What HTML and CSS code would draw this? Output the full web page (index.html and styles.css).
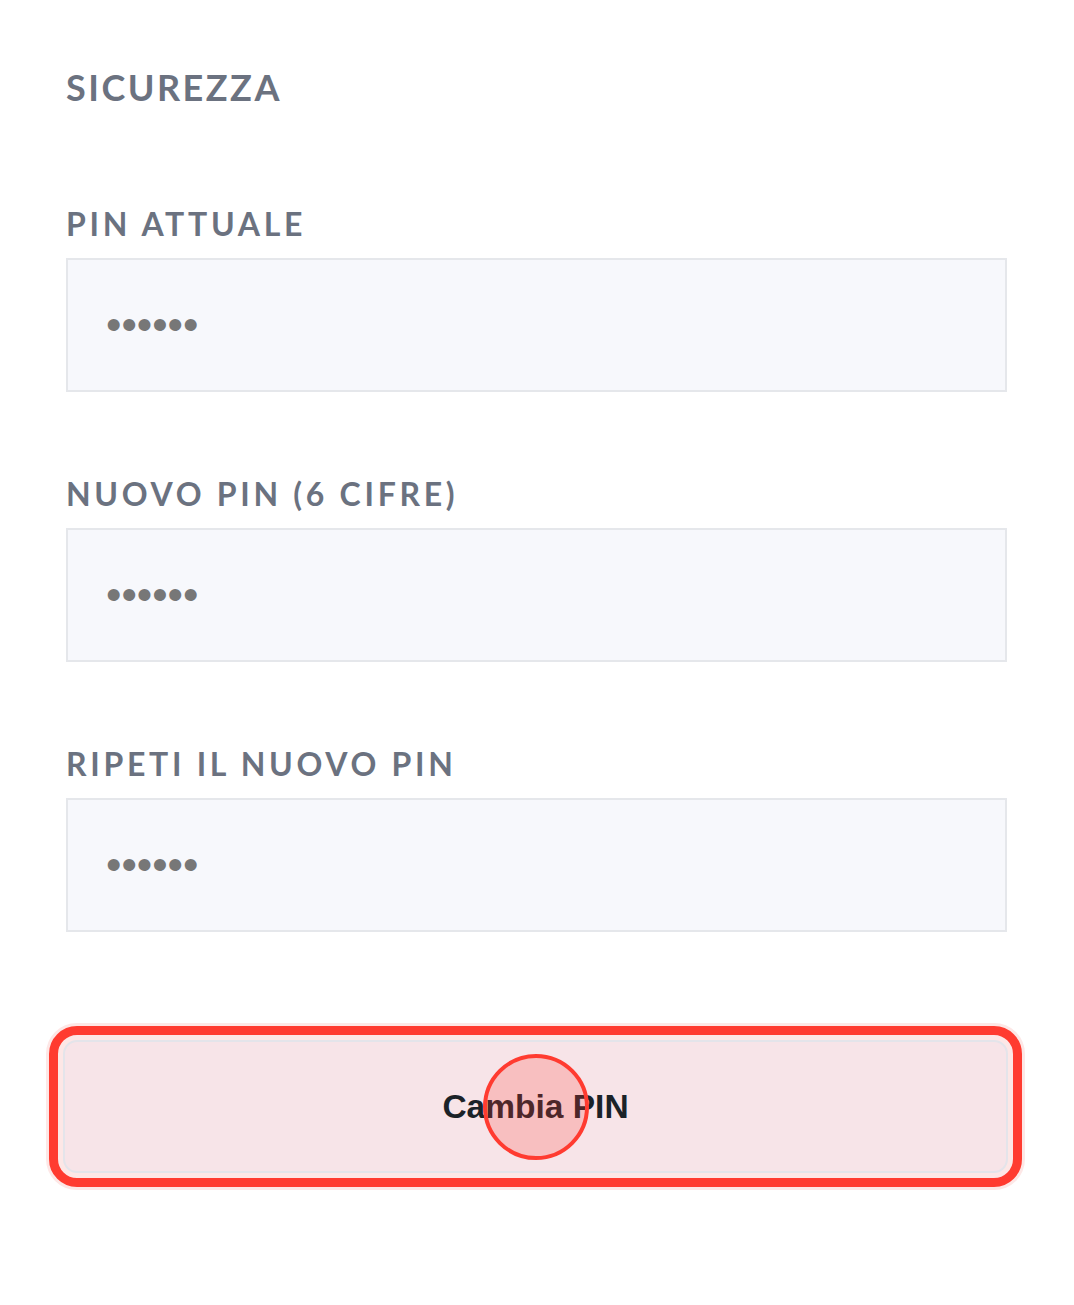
FILE: index.html
```html
<!DOCTYPE html>
<html lang="it">
<head>
<meta charset="utf-8">
<title>Sicurezza</title>
<link rel="stylesheet" href="styles.css">
</head>
<body>
<main class="page">
  <h2 class="section-title">SICUREZZA</h2>
  <form class="pin-form">
    <div class="field">
      <label class="field-label">PIN ATTUALE</label>
      <div class="field-input"><span class="mask">••••••</span></div>
    </div>
    <div class="field">
      <label class="field-label">NUOVO PIN (6 CIFRE)</label>
      <div class="field-input"><span class="mask">••••••</span></div>
    </div>
    <div class="field">
      <label class="field-label">RIPETI IL NUOVO PIN</label>
      <div class="field-input"><span class="mask">••••••</span></div>
    </div>
    <div class="actions">
      <button type="button" class="btn-change">Cambia PIN<span class="tap-marker"></span></button>
    </div>
  </form>
</main>
</body>
</html>
```

FILE: styles.css
```css
* { box-sizing: border-box; }
html, body { margin: 0; padding: 0; background: #ffffff; }
body { font-family: "Lato", "Noto Sans", sans-serif; }

.page {
  padding: 65px 67px 130px 66px;
  width: 1074px;
}

.section-title {
  margin: 0;
  font-size: 36px;
  line-height: 44px;
  font-weight: 700;
  letter-spacing: 2.5px;
  color: #6b7280;
}

.pin-form {
  margin-top: 95px;
  display: flex;
  flex-direction: column;
  gap: 82px;
}

.field {
  display: flex;
  flex-direction: column;
  gap: 14px;
}

.field-label {
  font-size: 32px;
  line-height: 40px;
  font-weight: 700;
  letter-spacing: 3.7px;
  color: #6b7280;
}

.field-input {
  height: 134px;
  width: 941px;
  border: 2px solid #e5e7eb;
  background: #f7f8fc;
  display: flex;
  align-items: center;
  padding-left: 38px;
}

.mask {
  font-family: "Liberation Sans", Arial, sans-serif;
  font-size: 44px;
  line-height: 1;
  color: #777777;
}

.actions {
  margin-top: 26px;
  margin-left: -3px;
}

.btn-change {
  position: relative;
  display: block;
  width: 945px;
  height: 133px;
  border: 2px solid #e4e4ea;
  border-radius: 14px;
  background: #f7e4e8;
  font-family: "Liberation Sans", Arial, sans-serif;
  font-size: 33.5px;
  font-weight: 700;
  color: #1b2228;
  outline: 9px solid #ff3b30;
  outline-offset: 5px;
  box-shadow: 0 0 0 17px #fde7e6;
  padding: 0;
}

.tap-marker {
  position: absolute;
  left: 50%;
  top: 50%;
  width: 106px;
  height: 106px;
  margin: -53px 0 0 -53px;
  border-radius: 50%;
  border: 4px solid #ff3b30;
  background: rgba(255, 59, 48, 0.22);
}
```
